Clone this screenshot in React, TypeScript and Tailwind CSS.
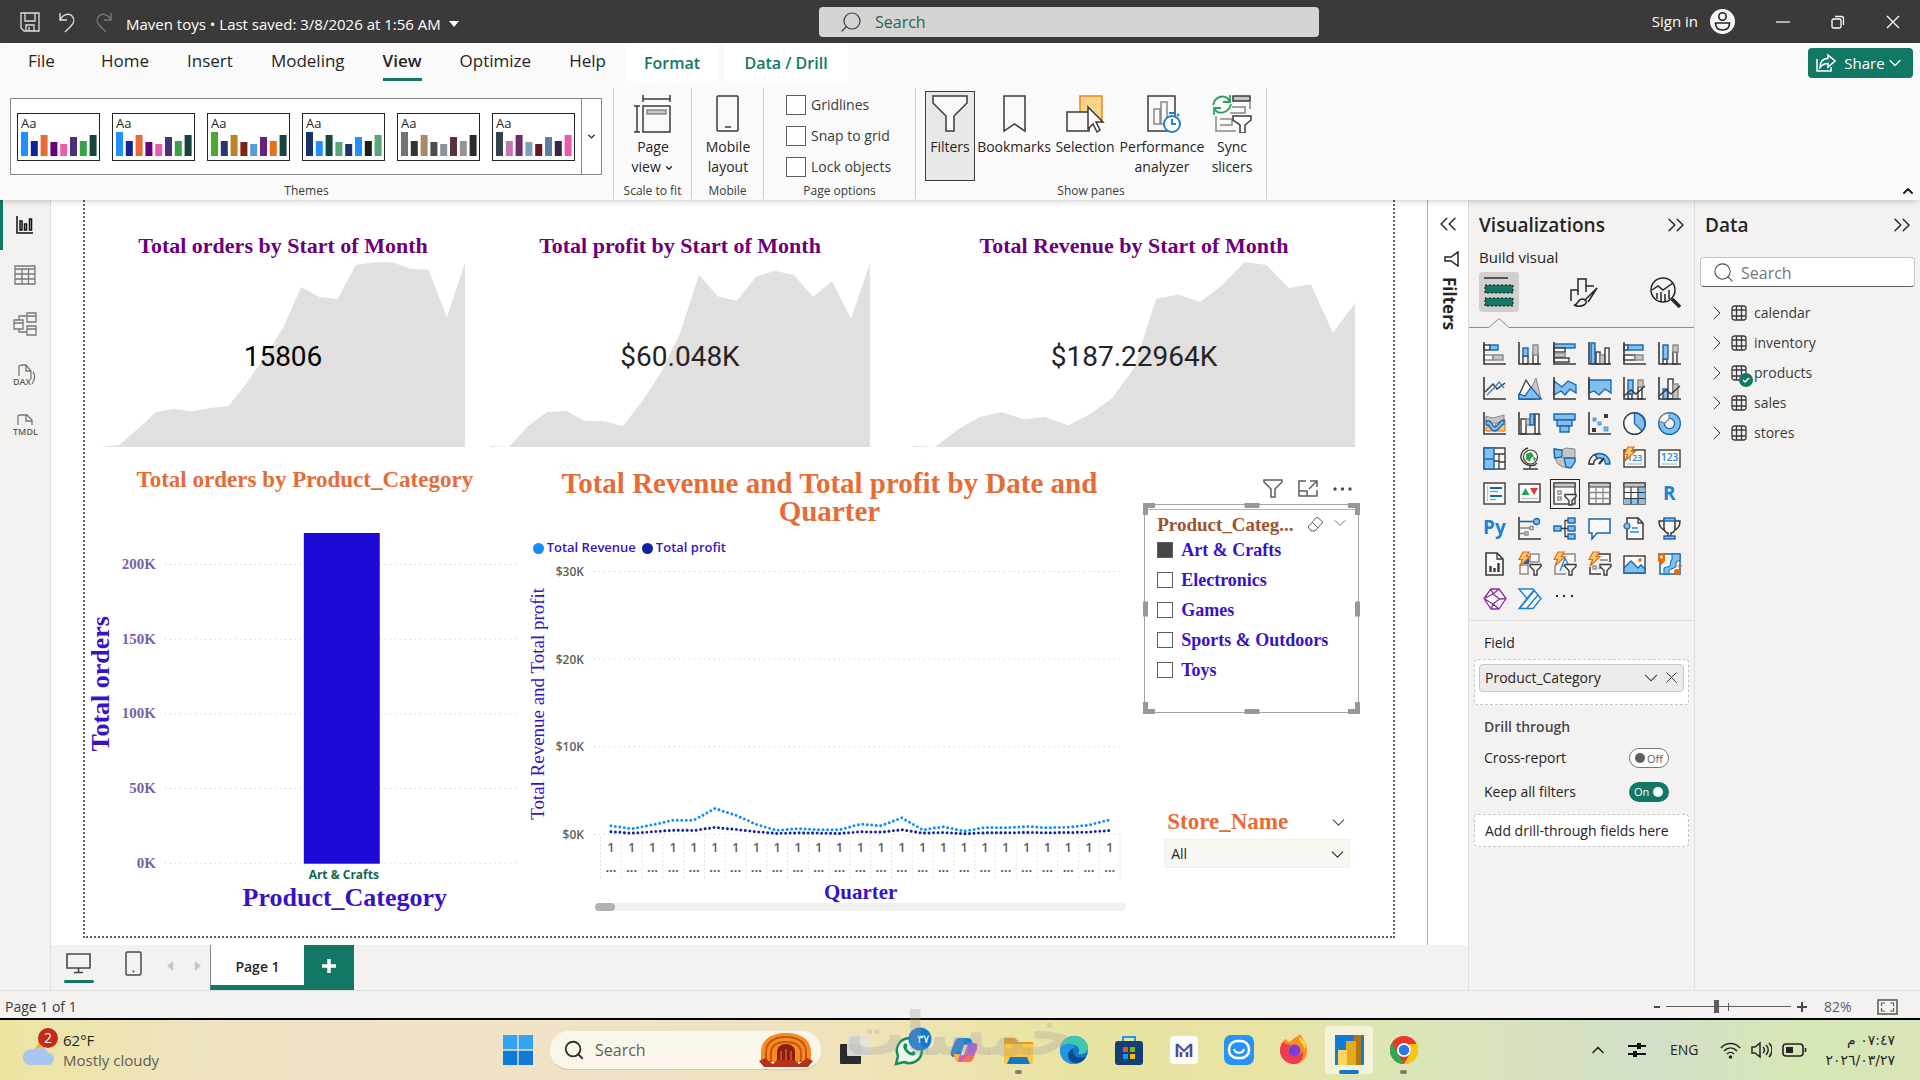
import React from "react";
import { ChevronDown, ChevronRight, ChevronsLeft, ChevronsRight, Search, X } from "lucide-react";

const D = "#3b3a39";
const B = "#1267b4";
const L = "#83beec";
const G = "#c8c6c4";
const S = "#8a8886";
const W = "#faf9f8";
const O = "#e06c12";
const Y = "#fbc56d";

const tabs = ["File", "Home", "Insert", "Modeling", "View", "Optimize", "Help"];

const themes = [
  ["#2190ff", "#12239e", "#e66c37", "#6b007b", "#e65cae", "#4b2f7d", "#37a24a", "#17453b"],
  ["#2190ff", "#12239e", "#e66c37", "#6b007b", "#e65cae", "#4b2f7d", "#37a24a", "#17453b"],
  ["#4aa832", "#2a356b", "#bd8423", "#7d2419", "#5c9bd6", "#6a1f7c", "#e6701d", "#17453b"],
  ["#1c3568", "#2190ff", "#17453b", "#57a578", "#1c3568", "#2190ff", "#17201b", "#57a578"],
  ["#6d7873", "#333333", "#a88a68", "#4a4f4d", "#8a949b", "#5b3236", "#949494", "#2b2b2b"],
  ["#35434d", "#c873b4", "#6b2d66", "#7d9fc0", "#6b1520", "#5b7fa8", "#3d2445", "#ea5aac"],
];
const themeBars = [24, 15, 21, 14, 12, 19, 15, 21];

const cards = [
  {
    title: "Total orders by Start of Month",
    value: "15806",
    pad: "pr-[25px]",
    tone: "text-black",
    data: [1, 6, 53, 104, 114, 107, 117, 123, 191, 271, 356, 479, 449, 443, 545, 553, 553, 534, 531, 388, 551],
  },
  {
    title: "Total profit by Start of Month",
    value: "$60.048K",
    pad: "pr-[43px]",
    tone: "text-[#252423]",
    data: [3, 0, 63, 105, 108, 78, 77, 63, 136, 223, 341, 516, 451, 438, 510, 528, 515, 449, 496, 385, 550],
  },
  {
    title: "Total Revenue by Start of Month",
    value: "$187.22964K",
    pad: "pr-[38px]",
    tone: "text-[#252423]",
    data: [4, 0, 51, 89, 105, 83, 90, 65, 98, 146, 236, 444, 457, 434, 485, 554, 545, 476, 487, 342, 431],
  },
];

const revenue = [27, 18, 30, 44, 44, 79, 59, 31, 13, 19, 15, 15, 32, 27, 51, 15, 24, 11, 22, 21, 25, 21, 23, 29, 45];
const profit = [9, 5, 9, 14, 13, 22, 16, 9, 4, 6, 5, 4, 9, 8, 15, 5, 7, 3, 6, 6, 7, 6, 7, 8, 13];

const categories = ["Art & Crafts", "Electronics", "Games", "Sports & Outdoors", "Toys"];
const tables = ["calendar", "inventory", "products", "sales", "stores"];

function Bx({ x, y, w, h, f = W, s = D }: { x: number; y: number; w: number; h: number; f?: string; s?: string }) {
  return <rect x={x} y={y} width={w} height={h} fill={f} stroke={s} strokeWidth="1.4" />;
}

function Axis() {
  return <path d="M1 0v22h22" fill="none" stroke={D} strokeWidth="1.6" />;
}

function Bolt() {
  return <path d="M5 0h6L8.500 4.500H12L2 14l2.500-6.500H1z" fill={Y} stroke={O} strokeWidth="1.2" />;
}

function MiniFunnel() {
  return <path d="M12 12.500h11v2l-4 4v4.500h-3v-4.500l-4-4z" fill={W} stroke={D} strokeWidth="1.4" />;
}

const visuals: { name: string; art: React.ReactNode }[] = [
  { name: "Stacked bar chart", art: <><Bx x={1} y={3} w={6} h={5} /><Bx x={7} y={3} w={8} h={5} f={L} s={B} /><Bx x={1} y={13} w={9} h={5} s={S} /><Bx x={10} y={13} w={10} h={5} f={G} s={S} /><Axis /></> },
  { name: "Stacked column chart", art: <><Bx x={5} y={14} w={5} h={8} /><Bx x={5} y={6} w={5} h={8} f={L} s={B} /><Bx x={15} y={12} w={5} h={10} /><Bx x={15} y={3} w={5} h={10} f={G} s={S} /><Axis /></> },
  { name: "Clustered bar chart", art: <><Bx x={1} y={2} w={21} h={4} f={L} s={B} /><Bx x={1} y={6} w={11} h={4} /><Bx x={1} y={11} w={11} h={4} f={G} s={S} /><Bx x={1} y={16} w={15} h={4} /><Axis /></> },
  { name: "Clustered column chart", art: <><Bx x={3} y={1} w={4} h={21} f={L} s={B} /><Bx x={8} y={10} w={4} h={12} /><Bx x={12} y={13} w={5} h={9} f={G} s={S} /><Bx x={17} y={6} w={4} h={16} /><Axis /></> },
  { name: "100% stacked bar chart", art: <><Bx x={1} y={3} w={4} h={5} /><Bx x={5} y={3} w={15} h={5} f={L} s={B} /><Bx x={1} y={13} w={11} h={5} /><Bx x={12} y={13} w={8} h={5} f={G} s={S} /><Axis /></> },
  { name: "100% stacked column chart", art: <><Bx x={5} y={17} w={4} h={5} /><Bx x={5} y={3} w={5} h={14} f={L} s={B} /><Bx x={15} y={10} w={4} h={12} /><Bx x={15} y={3} w={5} h={7} f={G} s={S} /><Axis /></> },
  { name: "Line chart", art: <><path d="M2 15l8-8 4 5 8-6" fill="none" stroke={D} strokeWidth="1.4" /><path d="M4 18l8-8 4-5 5 6" fill="none" stroke="#2b88d8" strokeWidth="1.4" /><Axis /></> },
  { name: "Area chart", art: <><path d="M8 22L18 1l5 21z" fill={G} stroke={S} /><path d="M1 18L8 3l9 14v5H1z" fill={W} stroke={D} strokeWidth="1.300" /><path d="M1 22v-5l6 2 6-9 10 12z" fill={L} stroke={B} strokeWidth="1.300" /></> },
  { name: "Stacked area chart", art: <><path d="M1 4l8 6 6-6 8 4v8l-6-4-5 6-4-4-7 4z" fill={L} stroke={B} strokeWidth="1.300" /><Axis /></> },
  { name: "100% stacked area chart", art: <><path d="M1 3h22v13l-6-4-6 6-5-4-5 2z" fill={L} stroke={B} strokeWidth="1.300" /><Axis /></> },
  { name: "Line and stacked column chart", art: <><Bx x={5} y={17} w={4} h={5} /><Bx x={5} y={3} w={5} h={14} f={L} s={B} /><Bx x={15} y={10} w={4} h={12} /><Bx x={15} y={3} w={5} h={7} f={G} s={S} /><path d="M1 19l7-6 5 4 9-8" fill="none" stroke={D} strokeWidth="1.400" /><Axis /></> },
  { name: "Line and clustered column chart", art: <><Bx x={5} y={12} w={5} h={10} f={L} s={B} /><Bx x={10} y={2} w={5} h={20} /><Bx x={15} y={7} w={5} h={15} f={G} s={S} /><path d="M1 19l7-6 5 4 9-8" fill="none" stroke={D} strokeWidth="1.400" /><Axis /></> },
  { name: "Ribbon chart", art: <><path d="M3 15h8l4-7h7v11H3z" fill={Y} stroke={O} /><path d="M3 4l6 2 5-1 7-2v5l-6 3H9L3 9z" fill={G} stroke={S} /><path d="M3 9h3c3 0 3 6 6 6s4-7 9-7v4c-4 0-4 7-9 7s-5-6-7-6H3z" fill={L} stroke={B} strokeWidth="1.300" /><Axis /></> },
  { name: "Waterfall chart", art: <><Bx x={3} y={7} w={5} h={15} /><Bx x={8} y={7} w={5} h={6} f={G} s={S} /><Bx x={12} y={2} w={4} h={11} f={L} s={B} /><Bx x={17} y={2} w={4} h={20} /><Axis /></> },
  { name: "Funnel chart", art: <><Bx x={1} y={2} w={21} h={6} f={L} s={B} /><Bx x={4} y={8} w={15} h={6} f={L} s={B} /><Bx x={7} y={14} w={9} h={6} f={L} s={B} /></> },
  { name: "Scatter chart", art: <><rect x="16" y="2" width="4" height="4" fill={D} /><rect x="5" y="6" width="3" height="3" fill={L} stroke={B} strokeWidth=".6" /><rect x="10" y="10" width="3" height="3" fill={L} stroke={B} strokeWidth=".6" /><rect x="16" y="15" width="4" height="4" fill={L} stroke={B} strokeWidth=".6" /><rect x="4" y="16" width="4" height="4" fill={D} /><Axis /></> },
  { name: "Pie chart", art: <><circle cx="11.500" cy="11.500" r="10.800" fill={W} stroke={D} strokeWidth="1.400" /><path d="M11.500 1a10.800 10.800 0 0 1 7.500 18l-7.500-7.500z" fill={L} stroke={B} strokeWidth="1.300" /></> },
  { name: "Donut chart", art: <><circle cx="11.500" cy="11.500" r="8" fill="none" stroke={B} strokeWidth="7" /><circle cx="11.500" cy="11.500" r="8" fill="none" stroke={L} strokeWidth="4.500" /><path d="M1 9A11 11 0 0 1 11 1v6l-4 4z" fill={W} stroke={S} strokeWidth="1.300" /></> },
  { name: "Treemap", art: <><Bx x={1} y={1} w={21} h={21} /><Bx x={1} y={1} w={10} h={21} f={L} s={B} /><path d="M1 12h10" stroke={B} strokeWidth="1.400" /><path d="M11 7h11M16 7v15M11 14h5M16 15h6" stroke={D} strokeWidth="1.300" fill="none" /></> },
  { name: "Map", art: <><circle cx="12.500" cy="10" r="7" fill={W} stroke={D} strokeWidth="1.200" /><path d="M8 7l5-2 3 4-3 2-1 4-4-3zM15 10l3 1-2 4z" fill="#2f9e44" /><path d="M10 1C3 3 1 11 5 15s11 5 14 1M12 19v3M5 22h15" fill="none" stroke={D} strokeWidth="1.400" /></> },
  { name: "Filled map", art: <><path d="M1 2l8 1 4-2 9 1v12l-6 7-6-1-5-3-4-7z" fill={G} stroke={S} /><path d="M1 2l8 1v7l-7 1zM11 11h11v4l-4 6-5-1z" fill={L} stroke={B} strokeWidth="1.300" /></> },
  { name: "Gauge", art: <><path d="M1 17A10.500 10.500 0 0 1 22 17h-4.500a6 6 0 0 0-12 0z" fill={L} stroke={B} strokeWidth="1.300" /><path d="M1 17A10.500 10.500 0 0 1 7 7.500l2 4a6 6 0 0 0-3.500 5.500z" fill={W} stroke={D} strokeWidth="1.300" /><path d="M11 17l5-6" stroke={D} strokeWidth="2.200" /></> },
  { name: "Card (new)", art: <><Bx x={1} y={3} w={21} h={17} /><text x="4" y="14" fontSize="9" fontWeight="600" fill="#2b88d8">123</text><path d="M4 17h15" stroke={G} strokeWidth="1.400" /><Bolt /></> },
  { name: "Card", art: <><Bx x={1} y={3} w={21} h={17} /><text x="3" y="14" fontSize="10" fontWeight="600" fill="#2b88d8">123</text><path d="M4 17h15" stroke={G} strokeWidth="1.400" /></> },
  { name: "Multi-row card", art: <><Bx x={1} y={1} w={21} h={21} /><path d="M4.500 4v15" stroke={G} strokeWidth="1.200" /><path d="M7 6h12M7 14h12" stroke={B} strokeWidth="2" /><path d="M7 9.500h8M7 17.500h6" stroke={S} strokeWidth="1.200" /></> },
  { name: "KPI", art: <><Bx x={1} y={2} w={21} h={18} /><path d="M3.500 13l4-7 4 7z" fill="#2f9e5f" /><path d="M12 6h8l-4 7z" fill="#e8382e" /><path d="M3 16.500h17" stroke={G} strokeWidth="1.400" /></> },
  { name: "Slicer", art: <><Bx x={1} y={1} w={21} h={21} /><rect x="1" y="1" width="21" height="4" fill={G} stroke={D} /><Bx x={5} y={9} w={3} h={3} s={S} /><Bx x={5} y={15} w={3} h={3} s={S} /><MiniFunnel /></> },
  { name: "Table", art: <><Bx x={1} y={1} w={21} h={21} /><rect x="1" y="1" width="21" height="4" fill={G} stroke={D} /><path d="M8 5v17M15 5v17M1 10.500h21M1 16.500h21" stroke={S} fill="none" strokeWidth="1.300" /></> },
  { name: "Matrix", art: <><Bx x={1} y={1} w={21} h={21} /><path d="M15 5h7v17H1v-6h14z" fill={L} /><rect x="1" y="1" width="21" height="4" fill={G} stroke={D} /><path d="M8 5v17M15 5v17M1 10.500h21M1 16.500h21" stroke={D} fill="none" strokeWidth="1.200" /></> },
  { name: "R script visual", art: <text x="5" y="18" fontSize="19" fontWeight="700" fill="#1883d7">R</text> },
  { name: "Python visual", art: <text x="0" y="17" fontSize="19" fontWeight="700" fill="#1883d7">Py</text> },
  { name: "Key influencers", art: <><path d="M2 4.500h14" stroke={B} strokeWidth="1.600" /><circle cx="18.500" cy="4.500" r="3" fill={L} stroke={B} strokeWidth="1.300" /><path d="M2 11h10M2 16.500h5" stroke={S} strokeWidth="1.400" /><Bx x={12} y={9.5} w={3} h={3} s={S} /><Bx x={7} y={15} w={3} h={3} s={S} /><Axis /></> },
  { name: "Decomposition tree", art: <><path d="M8 11.500h7M15 3.500h-3v16h3" fill="none" stroke={D} strokeWidth="1.300" /><Bx x={1} y={9} w={7} h={5} f={L} s={B} /><Bx x={15} y={1} w={7} h={5} f={L} s={B} /><Bx x={15} y={9} w={7} h={5} f={L} s={B} /><Bx x={15} y={17} w={7} h={5} f={L} s={B} /></> },
  { name: "Q&A", art: <path d="M1 2h21v14H9l-5 6v-6H1z" fill={W} stroke={B} strokeWidth="1.500" /> },
  { name: "Narrative", art: <><path d="M4 1h11l5 5v16H4z" fill={W} stroke={D} strokeWidth="1.500" /><path d="M15 1v5h5" fill="none" stroke={D} strokeWidth="1.300" /><circle cx="4" cy="9" r="3" fill={L} stroke={B} strokeWidth="1.200" /><path d="M9 11h6M7 15h9" stroke="#2b88d8" strokeWidth="1.400" /></> },
  { name: "Metrics", art: <><path d="M6 4H1c0 5 2 8 6 9M17 4h5c0 5-2 8-6 9" fill="none" stroke={D} strokeWidth="1.500" /><path d="M6 3h11v8c0 4-3 5-4 5v3h-3v-3c-1 0-4-1-4-5z" fill={W} stroke={D} strokeWidth="1.500" /><Bx x={6} y={1} w={11} h={3} f={L} s={B} /><Bx x={6} y={19} w={11} h={3} f={L} s={B} /></> },
  { name: "Paginated report", art: <><path d="M3 1h11l6 6v16H3z" fill={W} stroke={D} strokeWidth="1.600" /><path d="M14 1v6h6" fill="none" stroke={D} strokeWidth="1.300" /><path d="M7.500 20v-6M11.500 20v-4M15.500 20v-9" stroke={D} strokeWidth="2.400" /></> },
  { name: "Button slicer", art: <><Bx x={12} y={2} w={9} h={8} s={S} /><Bx x={2} y={13} w={8} h={9} s={S} /><path d="M6 6h5v6H6z" fill={B} /><Bolt /><MiniFunnel /></> },
  { name: "Text slicer", art: <><path d="M10 2h12v8M2 14v8h11" fill={W} stroke={S} strokeWidth="1.500" /><path d="M7 19l5-13 4 8M9 14h4" fill="none" stroke="#2b88d8" strokeWidth="1.400" /><Bolt /><MiniFunnel /></> },
  { name: "List slicer", art: <><path d="M10 2h12v8M2 15v7h11" fill={W} stroke={D} strokeWidth="1.500" /><path d="M12 8h8M10 16h4" stroke={S} strokeWidth="1.400" /><Bx x={5} y={14} w={3} h={3} s={S} /><Bolt /><MiniFunnel /></> },
  { name: "Image", art: <><Bx x={1} y={4} w={21} h={17} /><path d="M1 16l7-7 7 7 3-3 4 4v4H1z" fill={L} stroke={B} strokeWidth="1.300" /><circle cx="17" cy="8" r="1.800" fill={O} /></> },
  { name: "ArcGIS Maps", art: <><path d="M2 2h20v20H2z" fill={W} stroke={B} strokeWidth="1.500" /><path d="M14 2h8v6l-4 2v5l-7 3v4H6v-6l6-2 1-6h1z" fill={L} stroke={B} /><path d="M0 1h7v8l-3.500 4L0 9z" fill={O} /><circle cx="3.500" cy="5" r="1.500" fill={W} /><circle cx="19" cy="20" r="3" fill={O} /><circle cx="22" cy="14" r="1.800" fill={O} /></> },
  { name: "Power Apps", art: <path d="M8 2h8l7 9.500L16 22H8L1 11.500zM16 2l-6 5 6.500 5-6.500 5 6 5M8 2l2 5M8 22l2-5M23 11.500L16.500 12M10 7l6-5M1 11.500L10 7M1 11.500L10 17" fill={W} stroke="#8a2fa0" strokeWidth="1.300" strokeLinejoin="round" /> },
  { name: "Power Automate", art: <path d="M1 2h14l8 9.500-8 10H1l8-10zM9 11.500L16 3M2 21L16 4M9 21L20 8" fill={W} stroke="#1683d8" strokeWidth="1.400" /> },
  { name: "Get more visuals", art: <><rect x="3" y="8" width="2" height="2" fill="#252423" /><rect x="10" y="8" width="2" height="2" fill="#252423" /><rect x="18" y="8" width="2" height="2" fill="#252423" /></> },
];

function TitleBar() {
  return (
    <header className="grid h-[43px] grid-cols-[819fr_500fr_601fr] items-center bg-[#3b3a39] text-white">
      <div className="flex items-center">
        <div className="flex w-[126px] items-center gap-[15px] pl-[19px]">
          <button aria-label="Save">
            <svg width="22" height="22" viewBox="0 0 22 22" fill="none" stroke="#e1dfdd" strokeWidth="1.300">
              <path d="M2 2h18v18H5l-3-3zM6 2v8h10V2M7 20v-6h8v6M10 16v4" />
            </svg>
          </button>
          <button aria-label="Undo">
            <svg width="22" height="22" viewBox="0 0 22 22" fill="none" stroke="#e1dfdd" strokeWidth="1.400">
              <path d="M4 2v7h7M4 9c3-6 9-7 12-4s2 7-1 10l-6 6" />
            </svg>
          </button>
          <button aria-label="Redo">
            <svg width="22" height="22" viewBox="0 0 22 22" fill="none" stroke="#7a7978" strokeWidth="1.400">
              <path d="M18 2v7h-7M18 9c-3-6-9-7-12-4s-2 7 1 10l6 6" />
            </svg>
          </button>
        </div>
        <button className="flex items-center gap-2 pt-1 text-[15px] leading-5">
          Maven toys • Last saved: 3/8/2026 at 1:56 AM
          <svg width="10" height="6" viewBox="0 0 10 6"><path d="M0 0h10L5 6z" fill="white" /></svg>
        </button>
      </div>
      <label className="flex h-[30px] items-center gap-3 rounded-sm bg-[#d4d4d2] px-[20px]">
        <Search className="shrink-0 -scale-x-100 text-[#3b3a39]" size={24} strokeWidth={1.2} />
        <input aria-label="Search commands" placeholder="Search" className="w-full bg-transparent text-base outline-none placeholder:text-[#2a6551]" />
      </label>
      <div className="flex items-center justify-end pr-[20px]">
        <button className="flex items-center gap-3 text-[15px]">
          Sign in
          <svg width="25" height="25" viewBox="0 0 25 25">
            <circle cx="12.500" cy="12.500" r="12.500" fill="#f7f6f5" />
            <circle cx="12.500" cy="7.500" r="3.700" fill="none" stroke="#252423" strokeWidth="1.600" />
            <path d="M5.500 14h14c0 5-3 7-7 7s-7-2-7-7z" fill="none" stroke="#252423" strokeWidth="1.600" />
          </svg>
        </button>
        <button aria-label="Minimize" className="ml-[41px]"><svg width="14" height="14" viewBox="0 0 14 14"><path d="M0 7h14" stroke="white" strokeWidth="1.200" /></svg></button>
        <button aria-label="Restore" className="ml-[41px]">
          <svg width="14" height="14" viewBox="0 0 14 14" fill="none" stroke="white" strokeWidth="1.300"><rect x="1" y="4" width="9" height="9" rx="1.500" /><path d="M4 1.500h6.500a2 2 0 0 1 2 2V10" /></svg>
        </button>
        <button aria-label="Close" className="ml-[41px]"><svg width="14" height="14" viewBox="0 0 14 14"><path d="M1 1l12 12M13 1L1 13" stroke="white" strokeWidth="1.300" /></svg></button>
      </div>
    </header>
  );
}

function Group({ label, width, children }: { label: string; width: string; children: React.ReactNode }) {
  return (
    <section className={`${width} flex h-[111px] shrink-0 flex-col justify-between border-r border-[#d2d0ce]`}>
      {children}
      <div className="text-center text-xs leading-[16px] text-[#3b3a39]">{label}</div>
    </section>
  );
}

function RibbonButton({ width, active, icon, children }: { width: string; active?: boolean; icon: React.ReactNode; children: React.ReactNode }) {
  return (
    <button className={`${width} ${active ? "border-[#3b3a39] bg-[#e9e8e8]" : "border-transparent"} flex h-[90px] flex-col items-center border pt-[3px] text-center text-sm leading-5 text-[#252423]`}>
      <svg width="40" height="38" viewBox="0 0 40 38" fill="none" stroke={D} strokeWidth="1.500" className="mb-1 shrink-0">{icon}</svg>
      <span className="whitespace-pre">{children}</span>
    </button>
  );
}

function Ribbon() {
  return (
    <div className="relative z-10 h-[157px] bg-[#fafafa] shadow-md">
      <nav className="flex h-[38px] items-stretch pr-[7px] text-base">
        <div className="flex w-[625px] gap-[38px] pl-[28px] text-[17px] text-[#252423]">
          {tabs.map((tab) => (
            <button key={tab} className={`min-w-[35px] border-b-[3px] pt-px text-left whitespace-nowrap ${tab === "View" ? "border-[#117865] font-semibold" : "border-transparent"}`}>
              {tab}
            </button>
          ))}
        </div>
        <button className="w-[94px] bg-white pt-px font-semibold text-[#117865]">Format</button>
        <button className="ml-[5px] w-[124px] bg-white pt-px font-semibold text-[#117865]">Data / Drill</button>
        <button className="mt-[5px] ml-auto flex h-[30px] w-[105px] items-center justify-center gap-2 rounded bg-[#117865] text-[15px] text-white">
          <svg width="20" height="20" viewBox="0 0 20 20" fill="none" stroke="white" strokeWidth="1.500">
            <path d="M1 6v12h14v-4M12 2l7 6-7 6v-3.500c-4 0-6 1-8 4 0-6 3-9 8-9z" />
          </svg>
          <span className="flex items-center">Share <ChevronDown size={20} strokeWidth={1.5} /></span>
        </button>
      </nav>
      <div className="flex pt-[7px]">
        <Group label="Themes" width="w-[614px]">
          <div className="mt-[10px] ml-[10px] flex h-[77px] w-[592px] border border-[#8a8886] bg-white">
            <div className="flex flex-1 items-center gap-[12px] pl-[6px]">
              {themes.map((colors, i) => (
                <button key={i} aria-label={`Theme ${i + 1}`} className="h-[48px] w-[83px] border border-[#252423] bg-white">
                  <svg width="81" height="46" viewBox="0 0 81 46">
                    <text x="3" y="14" fontSize="13" fill="#252423">Aa</text>
                    {colors.map((c, j) => (
                      <rect key={j} x={3 + j * 9.8} y={42 - themeBars[j]} width="7" height={themeBars[j]} fill={c} />
                    ))}
                  </svg>
                </button>
              ))}
            </div>
            <button aria-label="More themes" className="flex w-[20px] items-center justify-center border-l border-[#8a8886]">
              <ChevronDown size={11} strokeWidth={3} />
            </button>
          </div>
        </Group>
        <Group label="Scale to fit" width="w-[78px]">
          <RibbonButton width="w-[78px] mt-[3px]" icon={<><rect x="10" y="11" width="27" height="26" fill={W} /><rect x="14" y="15" width="19" height="4" fill={G} stroke={S} /><path d="M10 0v7M37 0v7M10 4h27M1 11h6M1 37h6M4 11v26" /></>}>
            {"Page\nview "}<ChevronDown size={10} strokeWidth={3} className="inline" />
          </RibbonButton>
        </Group>
        <Group label="Mobile" width="w-[72px]">
          <RibbonButton width="w-[72px] mt-[3px]" icon={<><rect x="9" y="1" width="21" height="35" rx="1" fill={W} /><path d="M17 32h6" /></>}>
            {"Mobile\nlayout"}
          </RibbonButton>
        </Group>
        <Group label="Page options" width="w-[152px]">
          <div className="mt-[7px] ml-[22px] flex flex-col gap-[11px]">
            {["Gridlines", "Snap to grid", "Lock objects"].map((name) => (
              <label key={name} className="flex h-[20px] items-center gap-[5px] text-sm text-[#3b3a39]">
                <input type="checkbox" className="h-[20px] w-[20px] appearance-none border border-[#605e5c] bg-white" />
                {name}
              </label>
            ))}
          </div>
        </Group>
        <Group label="Show panes" width="w-[351px]">
          <div className="mt-[3px] flex justify-center">
            <RibbonButton width="w-[50px]" active icon={<path d="M3 1h34v7L24 21v15h-8V21L3 8z" fill={W} />}>Filters</RibbonButton>
            <RibbonButton width="w-[78px]" icon={<path d="M10 1h21v35l-10.500-7L10 36z" fill={W} />}>Bookmarks</RibbonButton>
            <RibbonButton width="w-[64px]" icon={<><rect x="15" y="1" width="22" height="25" fill="#f8d48b" stroke="#e08a24" /><rect x="2" y="17" width="22" height="19" fill={W} /><path d="M23 12v22l5-5 4 8 3-2-4-8h7z" fill="white" /></>}>Selection</RibbonButton>
            <RibbonButton width="w-[90px]" icon={<><path d="M6 1h27v35H6z" fill={W} /><path d="M12 29V14h6v15zM19 29V7h6v22z" stroke={S} /><circle cx="30" cy="29" r="8" fill="white" stroke="#1883d7" strokeWidth="2" /><path d="M30 24v5h4M27 18h6M35 21l2-2" stroke="#1883d7" strokeWidth="2" /></>}>
              {"Performance\nanalyzer"}
            </RibbonButton>
            <RibbonButton width="w-[50px]" icon={<><rect x="21" y="1" width="17" height="5" fill={G} /><path d="M38 6v8M20 12h13v6H18M4 21v15h20M8 24h12v6H8" stroke={S} /><path d="M1 10C3 1 14-2 18 7M18 0v7h-7M19 9c-2 9-13 12-17 4M2 20v-7h7" stroke="#2f9e5f" strokeWidth="1.800" /><path d="M21 21h18v4l-6 5v8h-5v-8l-7-5z" fill="white" /></>}>
              {"Sync\nslicers"}
            </RibbonButton>
          </div>
        </Group>
        <button aria-label="Collapse ribbon" className="mr-[4px] ml-auto self-end">
          <ChevronDown className="rotate-180" size={16} strokeWidth={3} />
        </button>
      </div>
    </div>
  );
}

function Rail() {
  return (
    <nav className="flex w-[51px] shrink-0 flex-col border-r border-[#e1dfdd] bg-[#f3f2f1]">
      <button aria-label="Report view" className="flex h-[50px] items-center border-l-[3px] border-[#117865] pl-[12px]">
        <svg width="20" height="20" viewBox="0 0 20 20" fill="none" stroke="#111" strokeWidth="1.500"><path d="M2 1v17h16M5 6h2v9H5zM9.500 9h2v6h-2zM14.500 4h2v11h-2z" /></svg>
      </button>
      <button aria-label="Table view" className="flex h-[49px] items-center justify-center">
        <svg width="22" height="22" viewBox="0 0 22 22" fill="none" stroke="#797775" strokeWidth="1.300"><path d="M1 2h20v18H1zM1 5h20M1 10h20M1 15h20M8 5v15M14.500 5v15" /></svg>
      </button>
      <button aria-label="Model view" className="flex h-[50px] items-center justify-center">
        <svg width="24" height="24" viewBox="0 0 24 24" fill="none" stroke="#797775" strokeWidth="1.300"><path d="M1 8h9v9H1zM1 11h9M14 1h9v9h-9zM14 4h9M14 14h9v9h-9zM14 17h9M6 8V4h8M6 17v3h8" /></svg>
      </button>
      <button aria-label="DAX query view" className="flex h-[51px] items-center justify-center">
        <svg width="24" height="24" viewBox="0 0 24 24" fill="none" stroke="#797775" strokeWidth="1.300">
          <path d="M6 13V3l3-1h4l5 6v8M13 2v6h5M20 9c3 4 1 9-1 12" /><text x="0" y="22" fontSize="9" fontWeight="600" fill="#605e5c" stroke="none">DAX</text>
        </svg>
      </button>
      <button aria-label="TMDL view" className="flex h-[49px] items-center justify-center">
        <svg width="26" height="24" viewBox="0 0 26 24" fill="none" stroke="#797775" strokeWidth="1.300">
          <path d="M6 12V3l2-1h7l5 5v5M14 2v6h6" /><text x="1" y="22" fontSize="9" fontWeight="600" fill="#605e5c" stroke="none">TMDL</text>
        </svg>
      </button>
    </nav>
  );
}

function BarChart() {
  return (
    <figure>
      <h2 className="text-center font-['Liberation_Serif',serif] text-[23px] leading-[24px] font-bold text-[#e66c37]">Total orders by Product_Category</h2>
      <svg viewBox="0 0 440 436" className="mt-2 block w-full" fontFamily="Liberation Serif">
        {["200K", "150K", "100K", "50K", "0K"].map((t, i) => (
          <g key={t}>
            <path d={`M80 ${64.5 + i * 74.75}h354`} stroke="#c8c6c4" strokeDasharray="1 4" />
            <text x="71" y={69 + i * 74.75} textAnchor="end" fontSize="15" fontWeight="700" fill="#7b5fa3">{t}</text>
          </g>
        ))}
        <rect x="219" y="33" width="76" height="331" fill="#1d0ad6" />
        <text transform="translate(24 184) rotate(-90)" textAnchor="middle" fontSize="26" fontWeight="700" fill="#3a12c6">Total orders</text>
        <text x="259" y="379" textAnchor="middle" fontSize="12" fontWeight="700" fill="#0f6b4f" fontFamily="Open Sans">Art &amp; Crafts</text>
        <text x="260" y="406" textAnchor="middle" fontSize="26" fontWeight="700" fill="#3a12c6">Product_Category</text>
      </svg>
    </figure>
  );
}

function LineChart() {
  const x = (i: number) => 86 + i * 20.8;
  const line = (d: number[]) => d.map((v, i) => `${x(i)},${277 - v / 3}`).join(" ");
  return (
    <figure>
      <h2 className="pt-px text-center font-['Liberation_Serif',serif] text-[29px] leading-[28px] font-bold text-[#e66c37]">
        Total Revenue and Total profit by Date and<br />Quarter
      </h2>
      <div className="mt-[13px] flex h-[20px] items-center gap-[6px] pl-[8px] text-[13px] font-semibold text-[#3a12c6]">
        <span className="flex items-center gap-[3px]"><i className="h-[11px] w-[11px] rounded-full bg-[#118dff]" />Total Revenue</span>
        <span className="flex items-center gap-[3px]"><i className="h-[11px] w-[11px] rounded-full bg-[#12239e]" />Total profit</span>
      </div>
      <svg viewBox="0 0 610 345" className="block w-full overflow-visible">
        {["$30K", "$20K", "$10K", "$0K"].map((t, i) => (
          <g key={t}>
            <path d={`M69 ${13.5 + i * 87.67}h530`} stroke="#c8c6c4" strokeDasharray="1 4" />
            <text x="59" y={18 + i * 87.67} textAnchor="end" fontSize="12" fontWeight="600" fill="#605e5c">{t}</text>
          </g>
        ))}
        {Array.from({ length: 26 }, (_, i) => (
          <path key={i} d={`M${75.6 + i * 20.8} 279v41`} stroke="#c8c6c4" strokeDasharray="1 3" />
        ))}
        {revenue.map((_, i) => (
          <g key={i} textAnchor="middle" fontSize="13" fontWeight="600" fill="#605e5c">
            <text x={x(i)} y="294">1</text>
            <text x={x(i)} y="314" fontWeight="700">...</text>
          </g>
        ))}
        <polyline points={line(revenue)} fill="none" stroke="#118dff" strokeWidth="3" strokeDasharray="0 4.500" strokeLinecap="round" />
        <polyline points={line(profit)} fill="none" stroke="#12239e" strokeWidth="3" strokeDasharray="0 4.500" strokeLinecap="round" />
        <text transform="translate(19 146) rotate(-90)" textAnchor="middle" fontSize="19" fill="#3a12c6" fontFamily="Liberation Serif">Total Revenue and Total profit</text>
        <text x="336" y="341" textAnchor="middle" fontSize="21" fontWeight="700" fill="#3a12c6" fontFamily="Liberation Serif">Quarter</text>
      </svg>
      <div className="mr-[8px] ml-[70px] h-2 rounded-full bg-[#f0f0ef]"><div className="h-2 w-[20px] rounded-full bg-[#b3b0ad]" /></div>
    </figure>
  );
}

function Slicers() {
  return (
    <div className="pr-[34px] pl-[10px]">
      <div className="flex h-[36px] items-center justify-end gap-[15px] pt-[6px] pr-[6px]">
        <button aria-label="Filters on visual"><svg width="20" height="20" viewBox="0 0 20 20" fill="none" stroke="#605e5c" strokeWidth="1.500"><path d="M1 1h18v2l-7 7v8H8v-8L1 3z" /></svg></button>
        <button aria-label="Focus mode"><svg width="20" height="18" viewBox="0 0 20 18" fill="none" stroke="#605e5c" strokeWidth="1.500"><path d="M8 1H1v15h18v-6M1 11h8v5M12 1h7v6M19 1l-8 8" /></svg></button>
        <button aria-label="More options"><svg width="20" height="18" viewBox="0 0 20 18" fill="#494847"><circle cx="2" cy="9" r="1.700" /><circle cx="9.500" cy="9" r="1.700" /><circle cx="17" cy="9" r="1.700" /></svg></button>
      </div>
      <section className="relative h-[209px] border border-[#a6a4a2] px-[12px]">
        <div className="mx-[-12px] h-[5px] border-b border-[#b3b0ad]" />
        <i className="absolute -top-[2px] -left-[2px] h-[12px] w-[12px] border-t-5 border-l-5 border-[#9a9897]" />
        <i className="absolute -top-[2px] -right-[2px] h-[12px] w-[12px] border-t-5 border-r-5 border-[#9a9897]" />
        <i className="absolute -bottom-[2px] -left-[2px] h-[12px] w-[12px] border-b-5 border-l-5 border-[#9a9897]" />
        <i className="absolute -right-[2px] -bottom-[2px] h-[12px] w-[12px] border-r-5 border-b-5 border-[#9a9897]" />
        <i className="absolute -top-[2px] left-1/2 h-[5px] w-[15px] -translate-x-1/2 bg-[#9a9897]" />
        <i className="absolute -bottom-[2px] left-1/2 h-[5px] w-[15px] -translate-x-1/2 bg-[#9a9897]" />
        <i className="absolute top-1/2 -left-[2px] h-[15px] w-[5px] -translate-y-1/2 bg-[#9a9897]" />
        <i className="absolute top-1/2 -right-[2px] h-[15px] w-[5px] -translate-y-1/2 bg-[#9a9897]" />
        <div className="flex h-[25px] items-center justify-between pt-1 font-['Liberation_Serif',serif] text-[19px] leading-5 font-bold text-[#a0522d]">
          Product_Categ...
          <span className="-mr-[4px] flex items-start gap-[6px]">
            <button aria-label="Clear selections"><svg width="17" height="16" viewBox="0 0 17 16" fill="none" stroke="#605e5c"><path d="M10 1l6 5-8 9H4l-3-4zM5 6l6 6" /></svg></button>
            <button aria-label="Collapse"><ChevronDown size={20} strokeWidth={1} className="-mt-[3px] text-[#605e5c]" /></button>
          </span>
        </div>
        <ul className="font-['Liberation_Serif',serif] text-lg font-bold text-[#3a12c6]">
          {categories.map((name, i) => (
            <li key={name}>
              <label className="flex h-[30px] items-center gap-[8px] whitespace-nowrap">
                <input type="checkbox" defaultChecked={i === 0} className="h-[16px] w-[16px] shrink-0 appearance-none border border-[#605e5c] bg-white checked:bg-[#484644]" />
                {name}
              </label>
            </li>
          ))}
        </ul>
      </section>
      <section className="mt-[97px] pr-[9px] pl-[20px]">
        <label htmlFor="store" className="flex items-center justify-between pr-px pl-[3px] font-['Liberation_Serif',serif] text-[23px] leading-6 font-bold text-[#e66c37]">
          Store_Name
          <ChevronDown size={21} strokeWidth={1.2} className="text-[#494847]" />
        </label>
        <div className="relative mt-[5px]">
          <select id="store" className="h-[29px] w-full appearance-none border border-[#f0efed] bg-[#f8f7f2] px-[6px] text-sm text-[#252423]">
            <option>All</option>
          </select>
          <ChevronDown size={21} strokeWidth={1.2} className="pointer-events-none absolute top-[5px] right-[2px]" />
        </div>
      </section>
    </div>
  );
}

function Canvas() {
  return (
    <main className="flex-1 bg-white pr-[32px] pb-[7px] pl-[32px]">
      <div className="h-full border-2 border-t-0 border-dotted border-[#605e5c]">
        <div className="grid grid-cols-[389fr_423fr_480fr] pt-[34px] pl-[16px]">
          {cards.map((c) => (
            <figure key={c.title} className={c.pad}>
              <h2 className="text-center font-['Liberation_Serif',serif] text-[22px] leading-[24px] font-bold text-[#6b007b]">{c.title}</h2>
              <div className="mt-1 grid items-center *:[grid-area:1/1]">
                <svg viewBox="0 0 20 554" preserveAspectRatio="none" className="h-[185px] w-full">
                  <polygon points={`0,554 ${c.data.map((v, i) => `${i},${554 - v}`).join(" ")} 20,554`} fill="#e1e0df" />
                </svg>
                <div className={`pt-1 text-center font-[Roboto,sans-serif] text-[28px] ${c.tone}`}>{c.value}</div>
              </div>
            </figure>
          ))}
        </div>
        <div className="mt-[21px] grid grid-cols-[440fr_610fr_259fr]">
          <BarChart />
          <LineChart />
          <Slicers />
        </div>
      </div>
    </main>
  );
}

function PageTabs() {
  return (
    <div className="flex h-[45px] items-stretch bg-[#f3f2f1]">
      <button aria-label="Desktop layout" className="ml-[13px] flex w-[30px] flex-col items-center pt-[8px]">
        <svg width="26" height="22" viewBox="0 0 26 22" fill="none" stroke="#494847" strokeWidth="1.600"><path d="M1 1h23v14H1zM12.500 15v4M8 19.500h9" /></svg>
        <span className="mt-[5px] h-[3px] w-full rounded bg-[#117865]" />
      </button>
      <button aria-label="Mobile layout" className="ml-[31px] self-start pt-[6px]">
        <svg width="17" height="25" viewBox="0 0 17 25" fill="none" stroke="#494847" strokeWidth="1.500"><rect x="1" y="1" width="15" height="23" rx="1.500" /><circle cx="8.500" cy="20.500" r="1" fill="#494847" stroke="none" /></svg>
      </button>
      <div className="ml-[25px] flex w-[43px] items-center gap-[22px] pb-1">
        <button aria-label="Previous page"><svg width="6" height="10" viewBox="0 0 6 10"><path d="M6 0v10L0 5z" fill="#c8c6c4" /></svg></button>
        <button aria-label="Next page"><svg width="6" height="10" viewBox="0 0 6 10"><path d="M0 0v10l6-5z" fill="#c8c6c4" /></svg></button>
      </div>
      <button className="w-[94px] border-b-5 border-l border-b-[#117865] border-l-[#8a8886] bg-white pt-1 text-sm font-semibold text-[#252423]">Page 1</button>
      <button aria-label="New page" className="flex w-[50px] items-center justify-center bg-[#117865] pb-1">
        <svg width="14" height="14" viewBox="0 0 14 14"><path d="M7 0v14M0 7h14" stroke="white" strokeWidth="3.500" /></svg>
      </button>
    </div>
  );
}

function Visualizations() {
  return (
    <aside className="w-[226px] shrink-0 border-l border-[#e1dfdd] bg-[#f3f2f1] text-[#252423]">
      <div className="flex h-[46px] items-center justify-between pt-[4px] pr-[4px] pl-[10px]">
        <h2 className="text-[19px] font-semibold">Visualizations</h2>
        <button aria-label="Collapse pane"><ChevronsRight size={28} strokeWidth={1.2} /></button>
      </div>
      <h3 className="pl-[10px] text-[15px] leading-[22px] font-medium">Build visual</h3>
      <div className="mt-[4px] flex h-[40px] items-center justify-between pr-[13px] pl-[10px]">
        <button aria-label="Build visual" className="flex h-[40px] w-[40px] items-center justify-center rounded-sm bg-[#d2d0ce]">
          <svg width="32" height="32" viewBox="0 0 32 32" fill="#117865" stroke="#111"><path d="M1 2h24" strokeWidth="1.300" /><rect x="2" y="9" width="28" height="8" strokeDasharray="2 2" /><rect x="2" y="22" width="28" height="8" strokeDasharray="2 2" /></svg>
        </button>
        <button aria-label="Format visual">
          <svg width="30" height="30" viewBox="0 0 30 30" fill="none" stroke="#252423" strokeWidth="1.500"><path d="M2 24V13h7M9 18V2h8v13M17 9h8M28 11L16 23M28 11l-9 14M5 28c4 0 4-6 8-6s6 4 2 6-8 1-10 0z" /></svg>
        </button>
        <button aria-label="Add further analyses">
          <svg width="32" height="32" viewBox="0 0 32 32" fill="none" stroke="#252423" strokeWidth="1.500"><circle cx="14" cy="14" r="12" /><path d="M3 14l6-4 5 4 10-7M8 17v6M12 16v10M16 18v8M20 14v9" /><path d="M23 23l8 8" strokeWidth="3.500" /></svg>
        </button>
      </div>
      <svg viewBox="0 0 226 16" className="block w-full" fill="none" stroke="#8a8886"><path d="M0 15.500h20l10-9 10 9h186" /></svg>
      <div className="grid grid-cols-6 pt-[11px] pr-[7px] pl-[8px]">
        {visuals.map((v) => (
          <button key={v.name} title={v.name} className={`m-auto mb-[5px] flex h-[30px] w-[30px] items-center justify-center ${v.name === "Slicer" ? "border border-[#252423]" : ""}`}>
            <svg width="24" height="24" viewBox="0 0 24 24" className="shrink-0 overflow-visible">{v.art}</svg>
          </button>
        ))}
      </div>
      <div className="mt-px border-t border-[#e1dfdd] px-[5px] text-sm">
        <h3 className="pt-[12px] pl-[10px] leading-5">Field</h3>
        <div className="mt-[6px] h-[46px] rounded-sm border border-dashed border-[#c8c6c4] bg-white p-[4px]">
          <div className="flex h-[28px] items-center rounded-sm border border-[#c8c6c4] bg-[#edebe9] pr-[2px] pl-[5px]">
            Product_Category
            <button aria-label="Field options" className="ml-auto"><ChevronDown size={22} strokeWidth={1.1} /></button>
            <button aria-label="Remove field"><X size={19} strokeWidth={1.1} /></button>
          </div>
        </div>
        <h3 className="pt-[12px] pl-[10px] leading-5 font-semibold text-[#494847]">Drill through</h3>
        <label className="flex h-[33px] items-center justify-between pt-[10px] pr-[20px] pl-[10px]">
          Cross-report
          <input type="checkbox" className="peer sr-only" />
          <span className="flex h-5 w-[40px] items-center gap-[2px] rounded-full border border-[#797775] bg-white pl-[5px] text-[11px] text-[#605e5c]"><i className="h-[10px] w-[10px] rounded-full bg-[#605e5c]" />Off</span>
        </label>
        <label className="flex h-[34px] items-center justify-between pt-[10px] pr-[20px] pl-[10px]">
          Keep all filters
          <input type="checkbox" defaultChecked className="peer sr-only" />
          <span className="flex h-5 w-[40px] items-center gap-[4px] rounded-full bg-[#117865] pl-[5px] text-[11px] text-white">On<i className="h-[10px] w-[10px] rounded-full bg-white" /></span>
        </label>
        <div className="mt-[10px] h-[33px] rounded-sm border border-dashed border-[#c8c6c4] bg-white pl-[10px] leading-[31px] whitespace-nowrap">Add drill-through fields here</div>
      </div>
    </aside>
  );
}

function DataPane() {
  return (
    <aside className="w-[226px] shrink-0 border-l border-[#e1dfdd] bg-[#f3f2f1] text-[#252423]">
      <div className="flex h-[46px] items-center justify-between pt-[4px] pr-[4px] pl-[10px]">
        <h2 className="text-[19px] font-semibold">Data</h2>
        <button aria-label="Collapse pane"><ChevronsRight size={28} strokeWidth={1.2} /></button>
      </div>
      <label className="mx-[5px] mt-[11px] flex h-[30px] items-center gap-[6px] rounded border border-b-[#605e5c] border-[#c8c6c4] bg-white pt-px pl-[11px]">
        <Search size={23} strokeWidth={1.1} className="shrink-0 text-[#494847]" />
        <input aria-label="Search fields" placeholder="Search" className="w-full text-base outline-none placeholder:text-[#797775]" />
      </label>
      <ul className="pt-[11px] text-sm text-[#3b3a39]">
        {tables.map((t) => (
          <li key={t}>
            <button className="flex h-[30px] items-center pl-[10px]">
              <ChevronRight size={24} strokeWidth={1} />
              <span className="relative mr-[7px] ml-[2px]">
                <svg width="16" height="16" viewBox="0 0 16 16" fill="none" stroke="#3b3a39" strokeWidth="1.300"><rect x="1" y="1" width="14" height="14" rx="2.500" /><path d="M5.500 1v14M10.500 1v14M1 5h14M1 11h14" /></svg>
                {t === "products" && (
                  <svg width="14" height="14" viewBox="0 0 14 14" className="absolute top-[8px] left-[8px]"><circle cx="7" cy="7" r="7" fill="#117865" /><path d="M4 7l2 2 4-4" fill="none" stroke="white" strokeWidth="1.500" /></svg>
                )}
              </span>
              {t}
            </button>
          </li>
        ))}
      </ul>
    </aside>
  );
}

function StatusBar() {
  return (
    <footer className="flex h-[30px] items-center border-t border-b-2 border-t-[#e1dfdd] border-b-black bg-[#f3f2f1] pt-1 text-sm text-[#3b3a39]">
      <span className="pl-[5px]">Page 1 of 1</span>
      <div className="ml-auto flex items-center pr-[22px] text-[#605e5c]">
        <button aria-label="Zoom out"><svg width="6" height="12" viewBox="0 0 6 12"><path d="M0 6h6" stroke="#494847" strokeWidth="2" /></svg></button>
        <input
          type="range"
          aria-label="Zoom"
          min={10}
          max={190}
          defaultValue={82}
          className="mx-[6px] h-[14px] w-[125px] appearance-none bg-[linear-gradient(#605e5c,#605e5c),linear-gradient(#605e5c,#605e5c)] bg-[length:100%_1px,1px_8px] bg-center bg-no-repeat [&::-webkit-slider-thumb]:h-[13px] [&::-webkit-slider-thumb]:w-[5px] [&::-webkit-slider-thumb]:appearance-none [&::-webkit-slider-thumb]:bg-[#605e5c]"
        />
        <button aria-label="Zoom in"><svg width="10" height="12" viewBox="0 0 10 12"><path d="M0 6h10M5 1v10" stroke="#494847" strokeWidth="2" /></svg></button>
        <span className="w-[70px] pl-[17px]">82%</span>
        <button aria-label="Fit to page"><svg width="21" height="16" viewBox="0 0 21 16" fill="none" stroke="#605e5c" strokeWidth="1.600"><rect x="1" y="1" width="19" height="14" /><path d="M8 4H4.500v3M13 4h3.500v3M8 12H4.500V9M13 12h3.500V9" strokeWidth="1.200" /></svg></button>
      </div>
    </footer>
  );
}

const apps: { name: string; mark?: string; art: React.ReactNode }[] = [
  { name: "Task view", art: <><rect x="1" y="9" width="21" height="20" rx="1" fill="#2b2b2b" /><rect x="8" y="1" width="22" height="20" rx="1" fill="#e4e2dd" opacity=".95" /></> },
  { name: "WhatsApp", art: <><path d="M2 29l2-8A12.500 12.500 0 1 1 10 27z" fill="#eaf6ea" stroke="#168c5a" strokeWidth="2.500" /><path d="M10 9c2-2 3 0 3.500 2l-1 2c1 2 3 4 5 4.500l2-1.500c2 1 3 2 1 4-4 3-14-6-10.500-11z" fill="#168c5a" /><circle cx="26" cy="4" r="11.500" fill="#0f78d4" /></> },
  { name: "Copilot", art: <><path d="M10 3h9c4 0 4 3 5 6l-9 1-4 12H6c-4 0-5-2-4-6l4-10c1-2 2-3 4-3z" fill="#1a7fd8" /><path d="M20 27h-9c-4 0-4-3-5-6l9-1 4-12h5c4 0 5 2 4 6l-4 10c-1 2-2 3-4 3z" fill="#d957b4" /><path d="M5 19l6 0-2 7c-3 0-4-3-4-7z" fill="#f5b53f" /><path d="M20 8l8 1-3 9-7 1z" fill="#9c57e0" /><path d="M12 27h8c3 0 4-3 5-6l-7 0z" fill="#f2754e" /></> },
  { name: "File Explorer", mark: "dot", art: <><path d="M0 3h11l3 4h15v22H0z" fill="#e59d1e" /><path d="M0 9h29v20H0z" fill="#fdc944" /><path d="M6 22h17l3 7H3z" fill="#1478cf" /></> },
  { name: "Edge", art: <><circle cx="15" cy="15" r="14" fill="#1673c5" /><path d="M1 15C2 5 10 0 17 1c8 1 12 7 12 12 0 5-5 7-10 6 2-2 2-8-4-9S3 11 1 15z" fill="#3cc8b0" /><path d="M2 12C8 6 16 8 16 14c-6 2-4 12 6 13C12 32 1 27 1 15z" fill="#2196e0" /><path d="M15 13c-3 6 2 12 12 9-4 7-14 8-17 2-2-5 0-9 5-11z" fill="#0d4a94" /></> },
  { name: "Store", art: <><path d="M9 7V2h12v5" fill="none" stroke="#1d9bea" strokeWidth="2" /><rect x="1" y="6" width="28" height="24" rx="3" fill="#123f78" /><path d="M9 12h5v5H9z" fill="#f25022" /><path d="M16 12h5v5h-5z" fill="#7fba00" /><path d="M9 19h5v5H9z" fill="#00a4ef" /><path d="M16 19h5v5h-5z" fill="#ffb900" /></> },
  { name: "Maven", art: <><rect x="1" y="1" width="28" height="28" rx="4" fill="#fcfcff" /><path d="M8 22V9M22 22V9M12 22v-5M18 22v-5" fill="none" stroke="#46509a" strokeWidth="2.600" /><path d="M8 9l7 7 7-7" fill="none" stroke="#46509a" strokeWidth="2" /></> },
  { name: "Chat", art: <><rect width="30" height="30" rx="7" fill="#2793f5" /><rect x="5" y="6" width="20" height="17" rx="8" fill="none" stroke="white" strokeWidth="2.500" /><path d="M10 14c1 5 9 5 10 0" fill="none" stroke="white" strokeWidth="2" /></> },
  { name: "Firefox", art: <><path d="M15 3c4-1 5-4 7-3 1 4 6 7 6 15 0 9-6 14-13 14S1 23 1 16C1 10 4 5 7 4c1 2 2 3 4 3z" fill="#fb8b1e" /><path d="M1 16c0-3 1-7 3-9 3 1 4 3 8 3-3 2-4 7 0 10s10 0 11-4c3 5-1 13-8 13S1 23 1 16z" fill="#f03a4d" /><circle cx="15.500" cy="15.500" r="6" fill="#7b3fd8" /><path d="M20 2c0 6 6 7 6 14 2-8-1-11-6-14z" fill="#ffdb3d" /></> },
  { name: "Power BI Desktop", mark: "active", art: <><rect x="1" y="0" width="29" height="30" fill="#0f7dd8" /><path d="M20 0h7v30h-7z" fill="#b3760b" /><path d="M12 6h10v24H12z" fill="#e5a91f" /><path d="M4 15h9v15H4z" fill="#fbd55c" /></> },
  { name: "Chrome", mark: "dot", art: <><circle cx="15" cy="15" r="14" fill="#e8392c" /><path d="M3 8l7 12 5 9C7 29 1 23 1 15c0-3 1-5 2-7z" fill="#2da94f" /><path d="M28 9c4 10-3 20-13 20l7-12-2-8z" fill="#fdc60a" /><circle cx="15" cy="15" r="7" fill="white" /><circle cx="15" cy="15" r="5.300" fill="#2a79e8" /></> },
];

function Taskbar() {
  return (
    <footer className="relative grid h-[60px] grid-cols-[503fr_928fr_489fr] items-center bg-[linear-gradient(90deg,#ebe59f_0%,#efe3c3_11%,#f0e2c8_32%,#efe3b6_46%,#e9e3a2_56%,#e9e3a4_66%,#dbe6b4_72%,#d3dfc8_86%,#d8e7b6_94%,#d7e5b8_100%)]">
      <button className="flex items-center gap-[4px] pl-[24px] text-left text-[15px] leading-[20px] text-[#252423]">
        <svg width="35" height="40" viewBox="0 0 35 40" className="overflow-visible">
          <path d="M14 7c2 8-3 14-12 15 3 6 10 8 15 5s6-13-3-20z" fill="#f8a824" />
          <path d="M9 35a8 8 0 1 1 1-15 8 8 0 0 1 14 3 6 6 0 0 1 0 12z" fill="#a8c6ef" />
          <circle cx="24" cy="8" r="10" fill="#c42b1c" />
          <text x="24" y="13" textAnchor="middle" fontSize="14" fill="white">2</text>
        </svg>
        <span>62°F<br /><span className="text-[#605e5c]">Mostly cloudy</span></span>
      </button>
      <div className="flex items-center">
        <button aria-label="Start">
          <svg width="30" height="30" viewBox="0 0 30 30"><path d="M0 0h14.300v14.300H0zM15.700 0H30v14.300H15.700z" fill="#34a4f2" /><path d="M0 15.700h14.300V30H0zM15.700 15.700H30V30H15.700z" fill="#0c7ad6" /></svg>
        </button>
        <label className="ml-[16px] flex h-[40px] w-[273px] shrink-0 items-center rounded-full border border-b-[#cfc8a8] border-[#ece5cc] bg-[#fbf6ea] pr-[8px] pl-[13px]">
          <Search size={22} strokeWidth={2} className="shrink-0 text-[#323130]" />
          <input aria-label="Search Windows" placeholder="Search" className="ml-[10px] w-full bg-transparent text-base outline-none placeholder:text-[#605e5c]" />
          <svg width="54" height="36" viewBox="0 0 54 36" className="shrink-0">
            <path d="M2 30V20C2 8 12 1 27 1s25 7 25 19v10z" fill="#f58b22" />
            <path d="M7 30V20C7 11 14 5 27 5s20 6 20 15v10M12 30V21c0-7 5-11 15-11s15 4 15 11v9" fill="none" stroke="#c8540f" strokeWidth="2" />
            <path d="M18 32V20c0-5 4-8 9-8s9 3 9 8v12z" fill="#8c1d12" />
            <path d="M22 30V19M27 30V17M32 30V19" stroke="#d4602a" strokeWidth="1.500" />
            <path d="M0 29l6-3 8 6 4-4h18l4 4 8-6 6 3-5 6H5z" fill="#b5321c" />
          </svg>
        </label>
        <div className="ml-[4px] flex">
          {apps.map((a) => (
            <button key={a.name} aria-label={a.name} className="flex w-[55px] justify-center">
              <span className={`relative flex h-[48px] w-[48px] items-center justify-center rounded ${a.mark === "active" ? "bg-[#f6f2d8]" : ""}`}>
                <svg width="30" height="30" viewBox="0 0 30 30" className="overflow-visible">{a.art}</svg>
                {a.name === "WhatsApp" && <span className="absolute top-[3px] right-[4px] text-xs leading-5 text-white">٣٧</span>}
                {a.mark && <i className={`absolute bottom-0 h-[4px] rounded-full ${a.mark === "active" ? "w-[20px] bg-[#0f78d4]" : "w-[7px] bg-[#7f7d72]"}`} />}
              </span>
            </button>
          ))}
        </div>
      </div>
      <div className="flex items-center justify-end pr-[25px] text-[#252423]">
        <button aria-label="Show hidden icons"><ChevronDown size={20} className="rotate-180" /></button>
        <button aria-label="Volume mixer" className="ml-[20px]"><svg width="18" height="16" viewBox="0 0 18 16" stroke="#111" strokeWidth="2.200"><path d="M0 4h18M0 12h18" /><path d="M11 1v6M7 9v6" strokeWidth="4" /></svg></button>
        <button className="ml-[24px] text-sm">ENG</button>
        <button aria-label="Network, volume and battery" className="ml-[22px] flex items-center gap-[10px]">
          <svg width="21" height="18" viewBox="0 0 21 18" fill="none" stroke="#252423" strokeWidth="1.600"><path d="M1 7c5-6 14-6 19 0M4 10c4-4 9-4 13 0M7 13c2-2 5-2 7 0" /><circle cx="10.500" cy="16" r="1" fill="#252423" /></svg>
          <svg width="21" height="18" viewBox="0 0 21 18" fill="none" stroke="#252423" strokeWidth="1.500"><path d="M1 6h3l5-4v14l-5-4H1zM12 6c2 2 2 4 0 6M15 4c3 3 3 7 0 10M18 2c4 4 4 10 0 14" /></svg>
          <svg width="25" height="14" viewBox="0 0 25 14" fill="none" stroke="#252423" strokeWidth="1.600"><rect x="1" y="1" width="20" height="12" rx="3" /><rect x="4" y="4" width="7" height="6" fill="#252423" stroke="none" /><path d="M23.500 5v4" /></svg>
        </button>
        <button dir="rtl" className="ml-[18px] text-right font-['DejaVu_Sans',sans-serif] text-sm leading-[20px]">٠٧:٤٧ م<br />٢٠٢٦/٠٣/٢٧</button>
      </div>
      <span lang="ar" className="pointer-events-none absolute -top-[26px] left-[44%] font-['DejaVu_Sans',sans-serif] text-[60px] leading-[80px] font-bold text-[#a0a0a0]/30">خمسات</span>
    </footer>
  );
}

export default function App() {
  return (
    <div className="flex min-h-screen flex-col overflow-x-hidden bg-[#f3f2f1] font-['Open_Sans','Noto_Sans',sans-serif] text-[#252423]">
      <TitleBar />
      <Ribbon />
      <div className="flex flex-1">
        <Rail />
        <div className="flex min-w-0 flex-1 flex-col">
          <div className="flex flex-1">
            <Canvas />
            <aside className="flex w-[41px] shrink-0 flex-col items-center border-l border-[#b3b0ad] bg-white pt-[10px]">
              <button aria-label="Expand filters"><ChevronsLeft size={28} strokeWidth={1.2} /></button>
              <svg width="16" height="16" viewBox="0 0 16 16" fill="none" stroke="#252423" strokeWidth="1.500" className="mt-[13px] ml-[6px]"><path d="M15 1v14l-7-5H2V6h6z" /></svg>
              <span className="mt-[10px] ml-[2px] text-[17px] font-bold [writing-mode:vertical-rl]">Filters</span>
            </aside>
          </div>
          <PageTabs />
        </div>
        <Visualizations />
        <DataPane />
      </div>
      <StatusBar />
      <Taskbar />
    </div>
  );
}
